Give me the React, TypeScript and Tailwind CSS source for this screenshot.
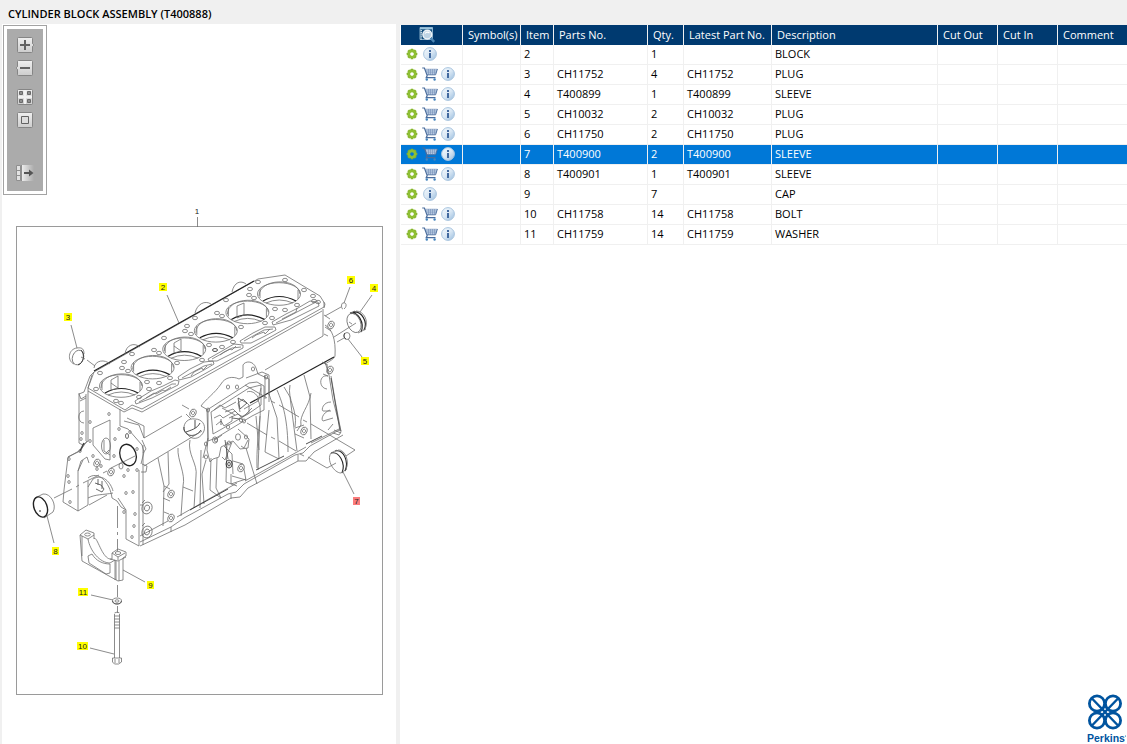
import type { ReactNode } from "react";

const INK = "#6f6f6f";
const DARK = "#222222";

type Part = { item: string; no: string; qty: string; desc: string };

const PARTS: Part[] = [
  { item: "2", no: "", qty: "1", desc: "BLOCK" },
  { item: "3", no: "CH11752", qty: "4", desc: "PLUG" },
  { item: "4", no: "T400899", qty: "1", desc: "SLEEVE" },
  { item: "5", no: "CH10032", qty: "2", desc: "PLUG" },
  { item: "6", no: "CH11750", qty: "2", desc: "PLUG" },
  { item: "7", no: "T400900", qty: "2", desc: "SLEEVE" },
  { item: "8", no: "T400901", qty: "1", desc: "SLEEVE" },
  { item: "9", no: "", qty: "7", desc: "CAP" },
  { item: "10", no: "CH11758", qty: "14", desc: "BOLT" },
  { item: "11", no: "CH11759", qty: "14", desc: "WASHER" },
];

const SELECTED = "7";

function GearIcon({ hole }: { hole: string }) {
  return (
    <svg width="12" height="12" viewBox="-6 -6 12 12" aria-hidden="true">
      {[0, 45, 90, 135].map((a) => (
        <rect key={a} x="-1.4" y="-5.3" width="2.8" height="10.6" rx="0.6" fill="#86b52c" transform={`rotate(${a})`} />
      ))}
      <circle r="3" fill={hole} stroke="#8fbf33" strokeWidth="2.4" />
    </svg>
  );
}

function CartIcon() {
  return (
    <svg width="16" height="14" viewBox="0 0 16 14" fill="none" aria-hidden="true">
      <path d="M3.2 2.2H15.4L13.6 7.6H5z" fill="#c4d4e8" />
      <path d="M3.2 2.2h12.2M4 4h11M4.6 5.8h9.8M6.5 2v5.600M8.500 2v5.600M10.500 2v5.600M12.500 2v5.600" stroke="#7590b8" strokeWidth="0.6" />
      <path d="M15.400 2L13.600 7.800H5" stroke="#4a6c9c" strokeWidth="0.9" />
      <path d="M.2 1h2.200L5.200 8.600 4.200 10.700h9.300" stroke="#4a6c9c" strokeWidth="1.200" />
      <circle cx="4.800" cy="12.500" r="1.200" fill="#4384bd" />
      <circle cx="12.600" cy="12.500" r="1.200" fill="#4384bd" />
    </svg>
  );
}

function InfoIcon() {
  return (
    <svg width="14" height="14" viewBox="0 0 14 14" aria-hidden="true">
      <defs>
        <linearGradient id="info" x1="0" y1="0" x2="1" y2="1">
          <stop offset="0" stopColor="#f4f9fd" />
          <stop offset="0.5" stopColor="#d9e7f4" />
          <stop offset="1" stopColor="#98bcdd" />
        </linearGradient>
      </defs>
      <circle cx="7" cy="7" r="6.400" fill="url(#info)" stroke="#a9c5df" strokeWidth="1" />
      <path d="M6 3h2v2H6zM6 6h2v5H6z" fill="#41699f" />
    </svg>
  );
}

function PreviewIcon() {
  return (
    <svg width="17" height="16" viewBox="0 0 17 16" fill="none" aria-hidden="true">
      <path d="M1 .500h12.500v12H1z" fill="#14507f" stroke="#a9c9de" strokeWidth="0.800" />
      <path d="M1 1.500h12.500" stroke="#9cc7e0" strokeWidth="1.600" />
      <path d="M2.200 3v9.500" stroke="#e4eff6" strokeWidth="1.300" strokeDasharray="1.300 0.800" />
      <circle cx="8.300" cy="7.600" r="4.400" fill="#bdd3e4" stroke="#eef4f9" strokeWidth="1.400" />
      <path d="M6 6.500q2-2.500 4.500-.5" stroke="#ffffff" strokeWidth="1.200" />
      <path d="M11.600 11l3.600 3.800" stroke="#4c86b5" strokeWidth="2.400" />
    </svg>
  );
}

function ToolButton({ label, children }: { label: string; children: ReactNode }) {
  return (
    <button type="button" aria-label={label} className="block h-4 w-5">
      <svg width="20" height="16" viewBox="-2 0 20 16" fill="none" aria-hidden="true">
        <defs>
          <linearGradient id="key" x1="0" y1="0" x2="0" y2="1">
            <stop offset="0" stopColor="#efefef" />
            <stop offset="1" stopColor="#cdcdcd" />
          </linearGradient>
          <linearGradient id="fade" x1="0" y1="0" x2="1" y2="0">
            <stop offset="0" stopColor="#ececec" />
            <stop offset="1" stopColor="#ababab" />
          </linearGradient>
        </defs>
        {children}
      </svg>
    </button>
  );
}

const KeyCap = () => <rect x="0.5" y="0.5" width="15" height="15" rx="1" fill="url(#key)" stroke="#858585" />;

function Toolbar() {
  return (
    <div role="toolbar" aria-label="Drawing tools" className="m-px w-11 border border-[#a3a3a3] bg-white p-[3px]">
      <div className="flex flex-col items-center bg-[#ababab] pt-2 pb-2.5">
        <div className="flex flex-col gap-[7px]">
          <ToolButton label="Zoom in">
            <KeyCap />
            <path d="M15 6l2 2-2 2" fill="#dddddd" stroke="#8f8f8f" />
            <path d="M3 8h10M8 3v10" stroke="#636363" strokeWidth="2" />
          </ToolButton>
          <ToolButton label="Zoom out">
            <KeyCap />
            <path d="M1 6l-2 2 2 2" fill="#dddddd" stroke="#8f8f8f" />
            <path d="M3 8h10" stroke="#636363" strokeWidth="2" />
          </ToolButton>
        </div>
        <div className="mt-[13px] flex flex-col gap-[7px]">
          <ToolButton label="Show all">
            <KeyCap />
            <path d="M8 1v14M1 8h14" stroke="#f2f2f2" strokeWidth="2" />
            <path d="M2.500 2.500h3v3h-3zM10.500 2.500h3v3h-3zM2.500 10.500h3v3h-3zM10.500 10.500h3v3h-3z" fill="#8f8f8f" stroke="#6a6a6a" />
          </ToolButton>
          <ToolButton label="Fit to window">
            <KeyCap />
            <path d="M4.500 4.500h7v7h-7z" fill="#dddddd" stroke="#636363" />
          </ToolButton>
        </div>
        <div className="mt-[37px]">
          <ToolButton label="Toggle parts list">
            <rect x="5" y="0" width="12" height="16" fill="url(#fade)" />
            <path d="M-.5.5h4v15h-4zM-.5 5.500h4M-.5 10.500h4" fill="#e2e2e2" stroke="#8f8f8f" />
            <path d="M4.500 0v16" stroke="#8f8f8f" />
            <path d="M7 8h7" stroke="#555555" strokeWidth="2" />
            <path d="M12 4.500L16.500 8 12 11.500z" fill="#555555" />
          </ToolButton>
        </div>
      </div>
    </div>
  );
}

type Callout = { label: string; x: number; y: number; w: number; selected?: boolean };

const CALLOUTS: Callout[] = [
  { label: "2", x: 159, y: 283, w: 8 },
  { label: "3", x: 64, y: 313, w: 8 },
  { label: "6", x: 347, y: 276, w: 8 },
  { label: "4", x: 370, y: 284, w: 8 },
  { label: "5", x: 361, y: 357, w: 8 },
  { label: "7", x: 353, y: 497, w: 7, selected: true },
  { label: "8", x: 52, y: 547, w: 7 },
  { label: "9", x: 147, y: 581, w: 7 },
  { label: "11", x: 78, y: 588, w: 10 },
  { label: "10", x: 77, y: 642, w: 11 },
];

const BORES = [0, 1, 2, 3, 4, 5].map((i) => ({ x: 121 + i * 31.6, y: 386 - i * 18.4 }));

const DECK_HOLES = [
  [100, 373], [96, 389], [124, 362], [132, 354], [122, 368], [128, 371], [164, 338], [154, 350], [159, 353],
  [187, 326], [195, 318], [185, 331], [191, 334], [217, 313], [222, 316], [177, 363], [170, 378], [147, 382],
  [149, 389], [159, 383], [139, 397], [116, 401], [121, 403], [209, 345], [222, 347], [202, 360], [233, 342],
  [241, 327], [265, 323], [258, 282], [285, 280], [304, 290], [250, 289], [249, 295], [254, 298], [226, 300],
  [272, 318], [275, 309], [285, 310], [297, 305], [313, 296], [318, 302], [314, 301],
];

const SLOTS = [
  "M136 404l-1-3 16-10 12-5 12-6 4 1-1 4-14 7-12 6z M139 402l33-18 4 0 M146 398l8-5 2 1 7-4 2 1 6-4",
  "M179 380l-1-3 12-8 14-7 9-1 1 3-10 6-13 7z M182 378l22-12 8-2 M191 376l3-4 8-4 1 2 4-4",
  "M209 361l-1-2 14-8 12-7 9 1 0 3-12 6-14 7z M212 359l20-11 9-1 M220 355l4-3 6-3 2 1 4-4",
  "M241 343l-1-2 13-8 12-6 10 0 1 3-11 6-14 7z M244 341l20-11 9-1 M252 338l4-3 8-3 1 2 5-5",
  "M273 325l-1-3 14-8 12-6 12-7 8 1 1 4-14 7-14 7z M276 323l40-21 M282 319l14-7 1-4",
];

const FACE_HOLES = [
  [109, 414], [90, 422], [119, 429], [115, 439], [82, 433], [81, 439], [90, 441], [130, 432], [93, 456],
  [114, 456], [69, 459], [68, 476], [69, 482], [70, 502], [126, 493], [133, 492], [137, 470], [128, 470],
  [135, 514], [134, 526], [132, 537], [124, 512], [97, 469], [101, 466], [124, 476], [80, 451], [137, 449],
];

function Boss({ x, y, r = 4 }: { x: number; y: number; r?: number }) {
  return (
    <g>
      <ellipse cx={x} cy={y} rx={r} ry={r + 1} fill="#ffffff" transform={`rotate(20 ${x} ${y})`} />
      <ellipse cx={x} cy={y} rx={r * 0.5} ry={r * 0.6} transform={`rotate(20 ${x} ${y})`} />
    </g>
  );
}

function CylinderBlock() {
  return (
    <g>
      {/* Deck plate */}
      <path d="M94 372L258 279l27-4 35 21 5 8-1 4" />
      <path d="M94 371L254 281" stroke={DARK} strokeWidth="1.2" />
      <path d="M88 388l37 22 7-5 10 4 182-102v-5" />
      <path d="M88 391l36 21 8-4 10 4 180-101" />
      <path d="M94 372l-6 16M94 372l-4 4-6 16-5 2 2 5 5-3" />
      <path d="M94 368c1-8 11-9 16-4M125 354c1-9 9-12 15-7M195 313c2-9 10-13 16-9M232 292c2-10 9-12 14-8M88 388l4-13" />
      {BORES.map((b, i) => (
        <g key={i}>
          <ellipse cx={b.x} cy={b.y} rx="21.5" ry="11.3" fill="#ffffff" />
          <path d={`M${b.x - 20} ${b.y + 2}c0-18 39-19 41-2M${b.x - 19} ${b.y - 5}v9M${b.x + 19} ${b.y - 4}v9`} />
          <path d={`M${b.x - 16} ${b.y + 7}q16-9 33 0`} stroke={DARK} strokeWidth="1.2" />
          <path d={`M${b.x - 13} ${b.y + 9}q13-6 27 0`} />
        </g>
      ))}
      <path d="M111 380l7-4v12l-7 2zM111 383l7 5M174 343l7-4v12l-7 2zM174 346l7 5M237 306l7-3v12l-7 3z" />
      {DECK_HOLES.map(([x, y], i) => (
        <ellipse key={i} cx={x} cy={y} rx="2.5" ry="1.7" fill="#ffffff" />
      ))}
      <ellipse cx="215" cy="350" rx="2.5" ry="1.5" stroke={DARK} />
      {SLOTS.map((d) => (
        <path key={d} d={d} />
      ))}

      {/* Cylinder housing on the right side */}
      <path d="M323 309v27L265 370M324 315l6 4M325 325c7 4 11 14 10 31M335 356c-1 3-5 5-10 8" />
      <path d="M334 357L250 403" stroke={DARK} strokeWidth="1.2" />
      <Boss x={331} y={325} r={3} />
      <path d="M325 327l6 4M324 334l4 2M322 362l5 3M323 374l5 2" />
      <Boss x={330} y={370} r={3} />
      <path d="M325 362l4 13 4 25 8 31M331 376l4 24 6 32-2 3-6-2M327 364l1 10M328 376c-9-2-10 12-1 13M331 402c-8 0-10 8-8 9l8 0M330 410c-8 3-9 10-7 11l10-3M333 424l-5 6" />
      <path d="M331 378l9 53" stroke="#444444" />

      {/* Side cover flange and opening */}
      <path d="M201 406c4-6 14-13 20-22 4-7 12-8 18-5l4-2v-12c2-4 10-5 13 3l2 6 11 5v23M246 378l16-6 7 3v20M265 375v24" />
      <path d="M201 406l7 4v28l-5 20M207 410l42-27 8-1 7 4v24l-12 6-36 22-8 3z M211 412l38-24 12-3v20l-13 9-35 20z" />
      <path d="M214 418l6-3 3 3 12-7 6 6 8-4v-8l-6-6-5 4 2 9M216 425l5-4 3 5 8-5v-5M225 412l8-3 6 6M244 409l14-8 3-13M214 410l6-5 5 3 11-6M229 418l9-4 5 3 9-9M247 392c4-2 10 1 12 8" />
      <path d="M238 398l9 5-7 6zM221 419v6M232 418l8 1" stroke="#444444" />
      <path d="M208 438l-1 12 3 12 3-3 6-2 2-10 12-6 7 8 8-1 1-9-11-10M222 457l3 3 7-18M241 446l3 2 4-8M222 435l-7 5" />
      {[[253, 369], [237, 387], [266, 377], [228, 387], [208, 410], [206, 444], [206, 457], [228, 427], [244, 421], [246, 437], [229, 443], [241, 420], [216, 440]].map(([x, y], i) => (
        <ellipse key={i} cx={x} cy={y} rx="1.6" ry="2" />
      ))}
      <ellipse cx="238" cy="437" rx="2.5" ry="3.2" />
      <ellipse cx="215" cy="440" rx="2.5" ry="3.2" />
      <Boss x={193} y={413} r={3} />
      <path d="M182 405l7 4M186 414l5 5M144 438l38-22M184 430c-1-8 5-12 11-11 7 0 11 6 9 12-3 7-9 9-14 6z" />
      <path d="M184 427c-1 9 11 12 17 3M186 432c5-2 11-3 14-9M195 420v8" stroke={DARK} />

      {/* Crankcase wall and ribs */}
      <path d="M202 431L144 466M269 394l8 24 2 40M277 390c6 14 11 30 11 62M284 387l6 10 7 54M304 375l6 22 1 42M269 410l-4 42 14 7M258 400c6 12-2 30-1 68M256 416l3 34M311 393c-2 14-12 22-10 32l-4 6M290 385c-3 16 8 24 5 42" />
      <path d="M158 458l6 28-1 40M168 452l1 32-6 8M178 448c-1 12 8 26 5 38l-2 30M183 487l10 4M190 440c-3 14 8 24 6 36l-2 32M201 450l-1 58M206 460l-4 14 2 30M211 458l-1 32 11 8M217 458l-1 30 5 10M227 442l-1 40 11 4M246 448l11 36M224 446l8 8 1 20M233 461l10 3 3 16-14-4M231 474v10l15-5M260 416l-2 54" />
      <Boss x={171} y={494} r={3} />
      <Boss x={171} y={518} r={3} />
      <Boss x={147} y={508} r={5} />
      <Boss x={147} y={532} r={5} />
      <Boss x={241} y={468} r={3} />
      <Boss x={304} y={431} r={3} />
      <path d="M164 486l6 3M163 498l7 3M164 512l5 2M295 428l9-3M295 434l9 4M142 503l3-3M142 526l3-3" />
      <ellipse cx="229" cy="464" rx="3" ry="4" stroke={DARK} />
      <ellipse cx="229" cy="464" rx="1.3" ry="2" stroke={DARK} />
      <path d="M225 440l3 19" stroke="#444444" />

      {/* Base rail */}
      <path d="M140 542l31-15 13-9 44-24 8-2 8-8 51-29 8-2 7-7 31-17M140 546l32-15 13-6 46-27 9-1 8-9 50-27 8 0 8-9 29-17M140 536l28-15M177 517l60-34M245 481l61-34M311 443l28-14M334 430l7 3M231 494v5M171 527v5M298 455v6" />
      <path d="M190 510l38-21M256 470l28-14M306 444l16-8" stroke={DARK} />

      {/* Front face */}
      <path d="M88 388v53M79 393v50l4 2 5-4M86 394v47M80 401l6-3M87 441l-7 10-12 6-4 33-1 12 15 9 10-6v-24M68 457l11-6" />
      <path d="M120 409v17l8 3 14 16 2 7-3 12M124 421l15 4 5 13M127 418l17 8v12M142 440l4 9-3 4M143 445v100M139 470v76l-13-7v-29l-5-3-4-6-5-3c-2-16-14-28-24-20" />
      <path d="M126 510l-8-12M140 505h3M142 464l5 2-1 6h-5" />
      <path d="M93 428l17-8v40l-5-1-12-14zM84 411c-7 0-7 12 0 12M78 511v-40l3-10 6-4 2 6M78 471l5-11M88 487l5-8c10-6 18 4 20 12M88 498c8-4 15-3 25-5M89 505l18-10" />
      <ellipse cx="106" cy="446" rx="4.5" ry="8" />
      <path d="M104 440v11l6 4M109 450l-3 3" />
      <ellipse cx="128" cy="455" rx="8" ry="11" transform="rotate(-18 128 455)" stroke={DARK} strokeWidth="1.3" />
      {FACE_HOLES.map(([x, y], i) => (
        <ellipse key={i} cx={x} cy={y} rx="1.2" ry="1.5" />
      ))}
      <Boss x={97} y={463} r={3} />
      <Boss x={111} y={472} r={3} />
      <ellipse cx="121" cy="466" rx="2" ry="3" />
      <ellipse cx="127" cy="436" rx="1.5" ry="2.5" stroke="#444444" />
      <path d="M95 483l6 2 3 4-2 3-6-3M98 479v6M102 481v8" stroke="#444444" />
      <path d="M80 451l4-8" stroke="#444444" strokeWidth="1.5" />
    </g>
  );
}

function LooseParts() {
  return (
    <g>
      {/* Plug 3 */}
      <path d="M74 364c-7-3-6-15 3-16 6-1 7 2 7 6" />
      <ellipse cx="78" cy="357.500" rx="5.500" ry="7.500" transform="rotate(20 78 357.5)" />
      <path d="M81 350c4 4 3 13-3 15" stroke={DARK} />
      <path d="M81 357l4 2M87 360l8 6" />

      {/* Plugs 5 and 6, sleeve 4 */}
      <path d="M343 303c-2 0-2 6 0 6M343 303c4-1 4 4 1 6" />
      <ellipse cx="347" cy="336" rx="3" ry="3.5" />
      <path d="M345 333c-2 2-1 5 1 6" stroke={DARK} />
      <path d="M325 316l16-9M334 337l22-14M337 342l7-4" />
      <ellipse cx="354" cy="323" rx="6.5" ry="10" transform="rotate(-22 354 323)" />
      <path d="M350 313c8-2 15 10 11 19M353 312c9-1 15 10 11 18" stroke={DARK} strokeWidth="1.1" />
      <path d="M356 311c8 0 13 10 9 18M358 333l8-4M350 313l5-2M349 322l3 2" />

      {/* Sleeve 7 */}
      <path d="M341 473c-7 0-15-13-10-20" />
      <path d="M331 453c8-2 15 10 11 20M335 451c9-2 14 11 10 20" stroke={DARK} strokeWidth="1.1" />
      <path d="M338 450c7-1 12 12 8 19M331 453l6-3M341 473l6-4" />

      {/* Sleeve 8 */}
      <path d="M35 498l8-4c8-1 14 11 10 18l-9 6" />
      <ellipse cx="40.500" cy="507" rx="6.5" ry="10.5" transform="rotate(-20 40.5 507)" stroke={DARK} strokeWidth="1.4" />
      <circle cx="40" cy="511" r="0.6" fill={DARK} />

      {/* Bearing cap 9 */}
      <path d="M80 535l6-5 8 3v6c3-5 8 22 18 20v-6l6-4 8 3v4l-3 2v22l-5 1-36-20zM80 535l8 4 6-4M88 539c2 12 12 24 22 24l5-3v20M112 553l6 4 7-4M110 559l8 2 8-4M118 557v3" />
      <path d="M82 536v20M116 561v19M119 561v20" />
      <ellipse cx="87.500" cy="534.500" rx="2.8" ry="1.5" />
      <ellipse cx="118" cy="553" rx="2.8" ry="1.5" />
      <path d="M88 556l4-2c4 7 11 10 18 10v9l-4 1-17-11z" />

      {/* Washer 11 and bolt 10 */}
      <ellipse cx="117" cy="601" rx="4.5" ry="3" />
      <ellipse cx="117" cy="601" rx="2" ry="1.2" />
      <path d="M112.500 601c1 4 8 4 9 0" stroke="#444444" />
      <path d="M114.500 614v44M119.500 614v44M114.500 613q3-2 5 0M114.500 616h5M114.500 619h5M114.500 622h5M114.500 625h5M114.500 628h5M112.500 658h9v4l-3 2h-4l-2-2zM115 659v4M119 659v4" />
      <path d="M117.500 506v22M117.500 532v3M117.500 539v12M117.500 585v12M117.500 606v7" />

      {/* Assembly lines */}
      <path d="M54 498l18-9M76 487l3-2M83 483l16-8M103 473l4-2M111 468l24-12" />
      <path d="M245 385l22 13M271 401l4 2M279 405l20 12M303 420l4 2M311 424l44 26-9 6" />
      <path d="M222 408l13 7M239 418l4 2M247 423l20 12M271 437l4 2M279 441l17 10M300 454l4 2M308 457l19 11 9-5" />

      {/* Leaders */}
      <path d="M197.500 217v10M167 295l12 28M71 325l6 23M350 287l-6 16M372 295l-12 17M348 339l14 18M343 472l11 22M47 516l7 27M123 570l22 12M91 595l22 5M90 648l24 6" />
    </g>
  );
}

function Drawing() {
  return (
    <svg viewBox="2 196 394 548" className="block w-full" role="img" aria-label="Cylinder block exploded view">
      <rect x="16.500" y="226.500" width="366" height="468" fill="none" stroke="#9a9a9a" />
      <g fill="none" stroke={INK} strokeWidth="0.8" strokeLinejoin="round">
        <CylinderBlock />
        <LooseParts />
      </g>
      <g fontFamily="Liberation Sans, Arial, sans-serif" fontSize="8" textAnchor="middle" fill="#222222">
        <text x="197" y="214">1</text>
        {CALLOUTS.map((c) => (
          <g key={c.label}>
            <rect x={c.x} y={c.y} width={c.w} height="8" fill={c.selected ? "#fb7c7c" : "#ffff00"} />
            <text x={c.x + c.w / 2} y={c.y + 7}>{c.label}</text>
          </g>
        ))}
      </g>
    </svg>
  );
}

function PartRow({ part }: { part: Part }) {
  const selected = part.item === SELECTED;
  const cell = "overflow-hidden border-r border-b border-[#f0f0f0] px-[3px] align-top whitespace-nowrap last:border-r-0";
  return (
    <tr aria-selected={selected} className={selected ? "h-5 bg-[#0078d7] text-white" : "h-5 text-black"}>
      <td className="border-r border-b border-[#f0f0f0] pl-0.5 align-top">
        <div className="flex h-[18px] items-center">
          <button type="button" aria-label={`Options for item ${part.item}`} className="flex w-[18px] justify-center">
            <GearIcon hole={selected ? "#0078d7" : "#ffffff"} />
          </button>
          {part.no && (
            <button type="button" aria-label={`Add item ${part.item} to cart`} className="flex w-[18px] justify-center">
              <CartIcon />
            </button>
          )}
          <button type="button" aria-label={`Details of item ${part.item}`} className="flex w-[18px] justify-center">
            <InfoIcon />
          </button>
        </div>
      </td>
      <td className={cell} />
      <td className={cell}>{part.item}</td>
      <td className={cell}>{part.no}</td>
      <td className={cell}>{part.qty}</td>
      <td className={cell}>{part.no}</td>
      <td className={cell}>{part.desc}</td>
      <td className={cell} />
      <td className={cell} />
      <td className={cell} />
    </tr>
  );
}

const HEADINGS = ["Symbol(s)", "Item", "Parts No.", "Qty.", "Latest Part No.", "Description", "Cut Out", "Cut In", "Comment"];

function PartsTable() {
  return (
    <table className="w-full table-fixed border-separate border-spacing-0 text-[11px] leading-[18px]">
      <colgroup>
        <col className="w-[62px]" />
        <col className="w-[58px]" />
        <col className="w-[33px]" />
        <col className="w-[94px]" />
        <col className="w-9" />
        <col className="w-[88px]" />
        <col className="w-[166px]" />
        <col className="w-[60px]" />
        <col className="w-[60px]" />
        <col />
      </colgroup>
      <thead>
        <tr className="h-5 bg-[#003a70] text-white">
          <th scope="col" aria-label="Actions" className="border-r border-[#f0f0f0] pl-[18px]">
            <PreviewIcon />
          </th>
          {HEADINGS.map((h) => (
            <th key={h} scope="col" className="border-r border-[#f0f0f0] pl-[5px] text-left font-normal whitespace-nowrap last:border-r-0">
              {h}
            </th>
          ))}
        </tr>
      </thead>
      <tbody>
        {PARTS.map((p) => (
          <PartRow key={p.item} part={p} />
        ))}
      </tbody>
    </table>
  );
}

function PerkinsLogo() {
  return (
    <svg width="41" height="50" viewBox="0 0 41 50" role="img" aria-label="Perkins">
      <g fill="none" stroke="#00549f" strokeWidth="2.8">
        <circle cx="11" cy="9.500" r="7.600" />
        <circle cx="27" cy="9.500" r="7.600" />
        <circle cx="11" cy="26.500" r="7.600" />
        <circle cx="27" cy="26.500" r="7.600" />
        <path d="M6 4.500L19 18 6 31.500M32 4.500L19 18l13 13.500" strokeWidth="2.4" />
        <path d="M12 17.500q5 0 7-6 2 6 7 6M12 18.500q5 0 7 6 2-6 7-6" strokeWidth="1.2" />
      </g>
      <text x="1" y="48" fontFamily="Liberation Sans, Arial, sans-serif" fontSize="10.500" fontWeight="700" fill="#00549f">
        Perkins
      </text>
      <circle cx="39.500" cy="42" r="0.6" fill="#00549f" />
    </svg>
  );
}

export default function App() {
  return (
    <div className="flex min-h-screen flex-col bg-[#f0f0f0] font-['Open_Sans','Noto_Sans',sans-serif] text-black">
      <h1 className="h-6 pt-1 pl-2 text-[11px] leading-5 font-semibold">CYLINDER BLOCK ASSEMBLY (T400888)</h1>
      <main className="flex flex-1">
        <section aria-label="Drawing" className="ml-0.5 w-[394px] shrink-0 bg-white">
          <Toolbar />
          <Drawing />
        </section>
        <section aria-label="Parts list" className="mt-px ml-1 flex min-w-0 flex-1 flex-col bg-white pl-px">
          <PartsTable />
          <div className="mt-auto self-end">
            <PerkinsLogo />
          </div>
        </section>
      </main>
    </div>
  );
}
